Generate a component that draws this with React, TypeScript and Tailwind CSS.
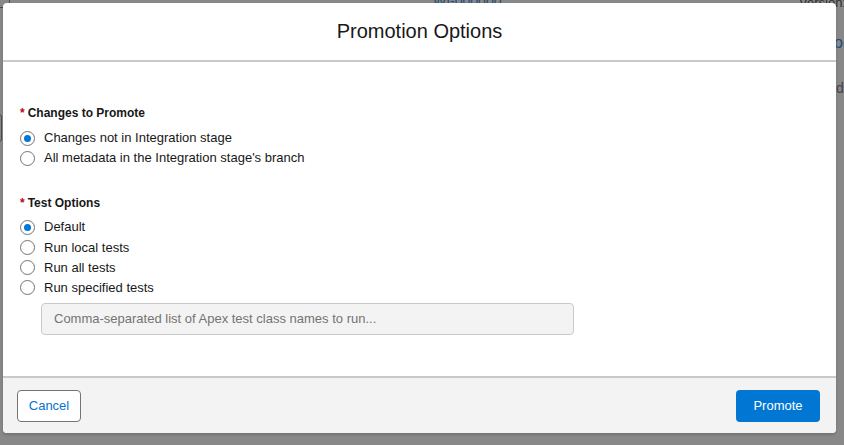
import { useState } from "react";

const font = { fontFamily: '"Liberation Sans", Arial, sans-serif' };

function Radio({ checked, label, onSelect }: { checked: boolean; label: string; onSelect: () => void }) {
  return (
    <label onClick={onSelect} className="flex h-[20px] cursor-pointer items-center gap-[9px]">
      <span className="flex h-[15px] w-[15px] shrink-0 items-center justify-center rounded-full border border-[#747474] bg-white">
        {checked && <span className="h-[7px] w-[7px] rounded-full bg-[#0176d3]" />}
      </span>
      <span className="text-[13px] text-[#181818]">{label}</span>
    </label>
  );
}

function GroupLabel({ text }: { text: string }) {
  return (
    <p className="flex h-[16px] items-center text-[12px] font-bold text-[#181818]">
      <span className="mr-[3px] text-[#ba0517]">*</span>
      {text}
    </p>
  );
}

export default function App() {
  const [scope, setScope] = useState("changes");
  const [tests, setTests] = useState("default");

  return (
    <div className="relative h-[445px] w-[844px] overflow-hidden bg-[#888888]" style={font}>
      {/* page behind the overlay, mostly hidden */}
      <span className="absolute left-[433px] top-[-9px] text-[14px] text-[#1f4e78]">WI-000000</span>
      <span className="absolute left-[799px] top-[-7px] text-[13px] text-[#2e2e2e]">Version:</span>
      <span className="absolute left-[834px] top-[31px] text-[16px] text-[#1f4e78]">oo</span>
      <span className="absolute left-[836px] top-[78px] text-[14px] text-[#444]">d</span>
      <div className="absolute left-[-6px] top-[114px] h-[28px] w-[8px] rounded-[3px] border border-[#4a4a4a]" />
      <div className="absolute left-[-6px] top-[-12px] h-[20px] w-[16px] rounded-[3px] border border-[#4a4a4a]" />

      <div className="absolute left-[3px] top-[3px] flex h-[430px] w-[833px] flex-col overflow-hidden rounded-[4px] bg-white shadow-[0_2px_3px_rgba(0,0,0,0.16)]">
        <div className="flex h-[59px] shrink-0 items-center justify-center border-b-2 border-[#c9c9c9]">
          <h2 className="text-[20px] leading-[25px] text-[#181818]">Promotion Options</h2>
        </div>

        <div className="flex-1 pl-[17px] pt-[43px]">
          <GroupLabel text="Changes to Promote" />
          <div className="mt-[7px] flex flex-col">
            <Radio checked={scope === "changes"} label="Changes not in Integration stage" onSelect={() => setScope("changes")} />
            <Radio checked={scope === "all"} label="All metadata in the Integration stage's branch" onSelect={() => setScope("all")} />
          </div>

          <div className="mt-[27px]">
            <GroupLabel text="Test Options" />
          </div>
          <div className="mt-[6px] flex flex-col gap-[0.3px]">
            <Radio checked={tests === "default"} label="Default" onSelect={() => setTests("default")} />
            <Radio checked={tests === "local"} label="Run local tests" onSelect={() => setTests("local")} />
            <Radio checked={tests === "all"} label="Run all tests" onSelect={() => setTests("all")} />
            <Radio checked={tests === "specified"} label="Run specified tests" onSelect={() => setTests("specified")} />
          </div>
          <input
            disabled={tests !== "specified"}
            placeholder="Comma-separated list of Apex test class names to run..."
            className="ml-[21px] mt-[5px] h-[32px] w-[533px] rounded-[4px] border border-[#c9c9c9] bg-[#f3f3f3] px-[12px] text-[13px] text-[#181818] placeholder:text-[#747474] outline-none"
            style={font}
          />
        </div>

        <div className="flex h-[57px] shrink-0 items-center justify-between border-t-2 border-[#c9c9c9] bg-[#f3f3f3] pl-[14px] pr-[16px]">
          <button className="h-[32px] w-[64px] rounded-[4px] border border-[#747474] bg-white text-[13px] text-[#0176d3]">
            Cancel
          </button>
          <button className="h-[32px] w-[84px] rounded-[4px] bg-[#0176d3] text-[13px] text-white">
            Promote
          </button>
        </div>
      </div>
    </div>
  );
}
